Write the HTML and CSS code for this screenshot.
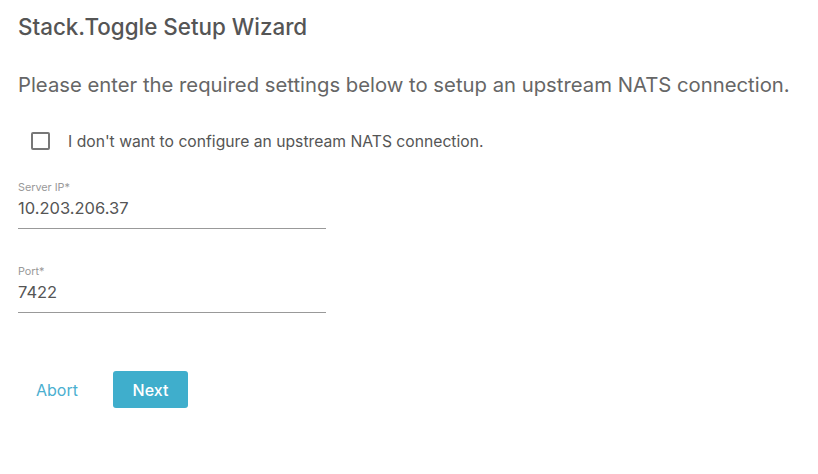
FILE: index.html
```html
<!DOCTYPE html>
<html>
<head>
<meta charset="utf-8">
<link rel="stylesheet" href="styles.css">
</head>
<body>
<div class="wizard">
  <h1 class="title">Stack.Toggle Setup Wizard</h1>
  <p class="intro">Please enter the required settings below to setup an upstream NATS connection.</p>
  <label class="check">
    <span class="box"></span>
    <span class="check-label">I don't want to configure an upstream NATS connection.</span>
  </label>
  <div class="field">
    <div class="field-label">Server IP*</div>
    <div class="field-value">10.203.206.37</div>
  </div>
  <div class="field">
    <div class="field-label">Port*</div>
    <div class="field-value">7422</div>
  </div>
  <div class="actions">
    <button class="btn-link">Abort</button>
    <button class="btn-primary">Next</button>
  </div>
</div>
</body>
</html>
```
FILE: styles.css
```css
html, body {
  margin: 0;
  padding: 0;
  background: #fff;
}
body {
  font-family: Inter, "Noto Sans", sans-serif;
  color: #555;
}
.wizard {
  padding: 13px 18px;
  display: flex;
  flex-direction: column;
  align-items: flex-start;
}
.title {
  margin: 0;
  font-size: 22.4px;
  font-weight: 500;
  color: #555;
  line-height: 28px;
}
.intro {
  margin: 30px 0 0;
  font-size: 20.3px;
  font-weight: 400;
  color: #666;
  line-height: 28px;
}
.check {
  display: flex;
  align-items: center;
  margin: 28px 0 0 13px;
  height: 28px;
}
.box {
  box-sizing: border-box;
  width: 19px;
  height: 18px;
  border: 2px solid #777;
  border-radius: 2px;
}
.check-label {
  margin-left: 18px;
  font-size: 15.7px;
  color: #555;
}
.field {
  width: 308px;
  border-bottom: 1px solid #999;
  margin-top: 26px;
  padding-bottom: 9px;
}
.field + .field {
  margin-top: 36px;
}
.field-label {
  font-size: 10.8px;
  color: #999;
  line-height: 14px;
}
.field-value {
  font-size: 16.5px;
  color: #555;
  line-height: 22px;
  margin-top: 2px;
}
.actions {
  display: flex;
  align-items: center;
  margin-top: 58px;
}
.btn-link {
  font-family: inherit;
  background: none;
  border: none;
  color: #4aafd0;
  font-size: 16px;
  padding: 0 18px;
  height: 37px;
}
.btn-primary {
  font-family: inherit;
  margin-left: 17px;
  width: 75px;
  height: 37px;
  border: none;
  border-radius: 3px;
  background: #3faecc;
  color: #fff;
  font-size: 16px;
  font-weight: 500;
}
```
